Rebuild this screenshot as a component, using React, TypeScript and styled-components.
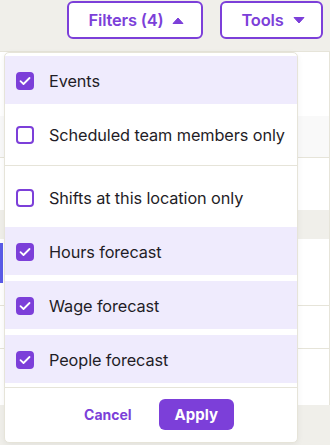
import React, { useState } from 'react';
import styled, { createGlobalStyle } from 'styled-components';

const GlobalStyle = createGlobalStyle`
  html, body {
    margin: 0;
    padding: 0;
    background: #f0efea;
    font-family: Inter, "Noto Sans", sans-serif;
  }
`;

const PURPLE = '#7c3fd9';

const Page = styled.div`
  position: relative;
  width: 330px;
  height: 445px;
  overflow: hidden;
  background: #f0efea;
`;

const Toolbar = styled.div`
  display: flex;
  justify-content: flex-end;
  gap: 17px;
  padding: 1px 7px 0 0;
  height: 51px;
  box-sizing: border-box;
`;

const ToolButton = styled.button<{ $width: number }>`
  display: flex;
  align-items: center;
  justify-content: center;
  gap: 9px;
  width: ${p => p.$width}px;
  height: 38px;
  background: #fff;
  border: 2px solid ${PURPLE};
  border-radius: 6px;
  color: ${PURPLE};
  font-family: inherit;
  font-size: 16.5px;
  font-weight: 600;
  letter-spacing: -0.2px;
  padding: 0 0 0 3px;
`;

const Table = styled.div`
  display: flex;
  flex-direction: column;
  width: 329px;
  border-right: 1px solid #e6e4d9;
  border-top: 1px solid #e6e4d9;
`;

const TableRow = styled.div<{ $h: number; $bg: string; $line?: boolean }>`
  position: relative;
  height: ${p => p.$h}px;
  background: ${p => p.$bg};
  border-bottom: ${p => (p.$line ? '1px solid #e6e4d9' : 'none')};
`;

const EdgeTag = styled.div<{ $top: number; $h: number }>`
  position: absolute;
  left: 0;
  top: ${p => p.$top}px;
  width: 3px;
  height: ${p => p.$h}px;
  background: #5b5ce8;
`;

const Panel = styled.div`
  position: absolute;
  left: 4px;
  top: 52px;
  width: 294px;
  box-sizing: border-box;
  background: #fff;
  border: 1px solid #e6e4d9;
  border-radius: 5px;
  box-shadow: 0 2px 6px rgba(0, 0, 0, 0.06);
  overflow: hidden;
`;

const Group = styled.div<{ $pt: number; $pb: number }>`
  display: flex;
  flex-direction: column;
  gap: 6px;
  padding: ${p => p.$pt}px 0 ${p => p.$pb}px;
  border-bottom: 1px solid #e6e4d9;
`;

const Option = styled.label<{ $checked: boolean }>`
  display: flex;
  align-items: center;
  gap: 15px;
  height: 48px;
  padding: 2px 0 0 11px;
  box-sizing: border-box;
  background: ${p => (p.$checked ? '#efebfd' : '#fff')};
  color: #1f1d27;
  font-size: 16.3px;
  letter-spacing: -0.1px;
  cursor: pointer;
`;

const Box = styled.span<{ $checked: boolean }>`
  display: flex;
  align-items: center;
  justify-content: center;
  width: 18px;
  height: 18px;
  box-sizing: border-box;
  border-radius: 4px;
  border: 2px solid ${PURPLE};
  background: ${p => (p.$checked ? PURPLE : '#fff')};
  flex-shrink: 0;
`;

const Footer = styled.div`
  display: flex;
  justify-content: center;
  align-items: center;
  gap: 11px;
  padding: 11px 0 12px;
`;

const TextButton = styled.button`
  background: none;
  border: none;
  padding: 0 16px;
  height: 31px;
  color: ${PURPLE};
  font-family: inherit;
  font-size: 14px;
  font-weight: 700;
`;

const PrimaryButton = styled.button`
  background: ${PURPLE};
  border: none;
  border-radius: 6px;
  padding: 0 16px;
  height: 31px;
  color: #fff;
  font-family: inherit;
  font-size: 15px;
  font-weight: 700;
`;

const Caret = ({ up }: { up?: boolean }) => (
  <svg width="12" height="7" viewBox="0 0 12 7">
    <path d={up ? 'M1 6.5 L6 1 L11 6.5 Z' : 'M1 0.5 L11 0.5 L6 6 Z'} fill={PURPLE} strokeLinejoin="round" stroke={PURPLE} strokeWidth="1" />
  </svg>
);

const Check = () => (
  <svg width="12" height="10" viewBox="0 0 12 10">
    <path d="M1.5 5.2 L4.5 8 L10.5 2" fill="none" stroke="#fff" strokeWidth="1.8" strokeLinecap="round" strokeLinejoin="round" />
  </svg>
);

const initial = {
  events: true,
  scheduled: false,
  location: false,
  hours: true,
  wage: true,
  people: true,
};

type Key = keyof typeof initial;

const groups: { key: Key; label: string }[][] = [
  [
    { key: 'events', label: 'Events' },
    { key: 'scheduled', label: 'Scheduled team members only' },
  ],
  [
    { key: 'location', label: 'Shifts at this location only' },
    { key: 'hours', label: 'Hours forecast' },
    { key: 'wage', label: 'Wage forecast' },
    { key: 'people', label: 'People forecast' },
  ],
];

export default function App() {
  const [values, setValues] = useState(initial);
  // forecasts + events count as the active filters
  const count = Object.values(values).filter(Boolean).length;

  return (
    <Page>
      <GlobalStyle />
      <Toolbar>
        <ToolButton $width={136}>
          Filters ({count}) <Caret up />
        </ToolButton>
        <ToolButton $width={103}>
          Tools <Caret />
        </ToolButton>
      </Toolbar>

      <Table>
        <TableRow $h={64} $bg="#fff" />
        <TableRow $h={41} $bg="#f9f9f9" $line />
        <TableRow $h={52} $bg="#fff" />
        <TableRow $h={29} $bg="#f0efea" />
        <TableRow $h={66} $bg="#fff" $line>
          <EdgeTag $top={4} $h={40} />
        </TableRow>
        <TableRow $h={42} $bg="#fff" $line>
          <EdgeTag $top={47} $h={40} />
        </TableRow>
        <TableRow $h={56} $bg="#fff" />
      </Table>

      <Panel>
        {groups.map((g, gi) => (
          <Group key={gi} $pt={gi === 0 ? 3 : 7} $pb={gi === 0 ? 7 : 4}>
            {g.map(o => (
              <Option
                key={o.key}
                $checked={values[o.key]}
                onClick={() => setValues(v => ({ ...v, [o.key]: !v[o.key] }))}
              >
                <Box $checked={values[o.key]}>{values[o.key] && <Check />}</Box>
                {o.label}
              </Option>
            ))}
          </Group>
        ))}
        <Footer>
          <TextButton>Cancel</TextButton>
          <PrimaryButton>Apply</PrimaryButton>
        </Footer>
      </Panel>
    </Page>
  );
}
